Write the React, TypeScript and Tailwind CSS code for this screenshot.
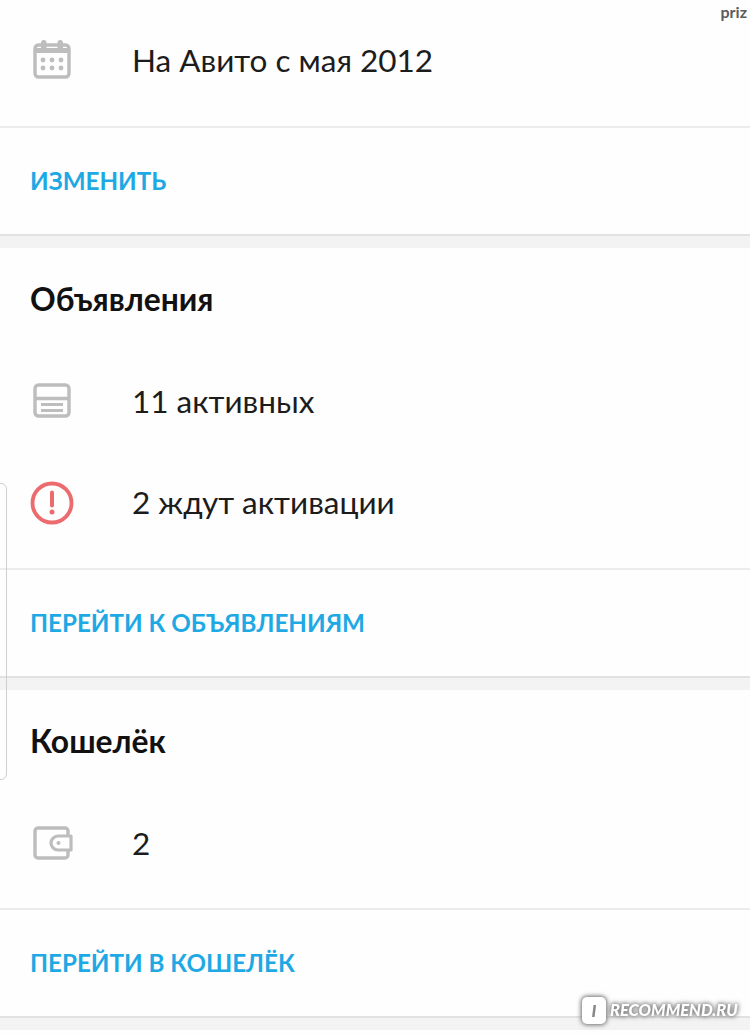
const lato = { fontFamily: '"Lato", "Noto Sans", sans-serif' };

function CalendarIcon() {
  return (
    <svg width="38" height="40" viewBox="0 0 38 40" fill="none" className="-translate-y-[1px]">
      <rect x="2" y="5" width="34" height="32" rx="3.5" stroke="#bdbdbd" strokeWidth="3.4" />
      <rect x="8" y="0" width="5.5" height="10" rx="2.7" fill="#bdbdbd" />
      <rect x="24.5" y="0" width="5.5" height="10" rx="2.7" fill="#bdbdbd" />
      <path d="M3 8h32v5H3z" fill="#bdbdbd" />
      <g fill="#bdbdbd">
        <circle cx="10" cy="20" r="2.4" />
        <circle cx="19" cy="20" r="2.4" />
        <circle cx="28" cy="20" r="2.4" />
        <circle cx="10" cy="28" r="2.4" />
        <circle cx="19" cy="28" r="2.4" />
        <circle cx="28" cy="28" r="2.4" />
      </g>
    </svg>
  );
}

function AdsIcon() {
  return (
    <svg width="38" height="36" viewBox="0 0 38 36" fill="none" className="-translate-y-[1px]">
      <rect x="2" y="2" width="34" height="31" rx="3.5" stroke="#bdbdbd" strokeWidth="3.4" />
      <path d="M2 15.5h34" stroke="#bdbdbd" strokeWidth="3.4" />
      <path d="M8 21.5h22M8 27.5h22" stroke="#bdbdbd" strokeWidth="3" />
    </svg>
  );
}

function AlertIcon() {
  return (
    <svg width="44" height="44" viewBox="0 0 44 44" fill="none" className="-ml-[3px]">
      <circle cx="22" cy="22" r="19.5" stroke="#ec6b6f" strokeWidth="3.8" />
      <path d="M22 11.5v13" stroke="#ec6b6f" strokeWidth="4" strokeLinecap="round" />
      <circle cx="22" cy="31" r="2.5" fill="#ec6b6f" />
    </svg>
  );
}

function WalletIcon() {
  return (
    <svg width="40" height="34" viewBox="0 0 40 34" fill="none" className="-translate-y-[1px]">
      <path d="M35 9V5a3 3 0 0 0-3-3H5a3 3 0 0 0-3 3v24a3 3 0 0 0 3 3h27a3 3 0 0 0 3-3v-4" stroke="#bdbdbd" strokeWidth="3.4" />
      <path d="M38 10H25a7 7 0 0 0 0 14h13z" stroke="#bdbdbd" strokeWidth="3.2" strokeLinejoin="round" />
      <circle cx="25.5" cy="17" r="2" fill="#bdbdbd" />
    </svg>
  );
}

function Row({ icon, text, h }: { icon: React.ReactNode; text: string; h: string }) {
  return (
    <div className={`flex items-center ${h}`}>
      <div className="flex w-[102px] shrink-0 items-center pl-[3px]">{icon}</div>
      <span className="text-[31.5px] leading-none text-[#1c1c1c]">{text}</span>
    </div>
  );
}

function Action({ label }: { label: string }) {
  return (
    <div className="flex h-[108px] items-center border-t-2 border-[#ececec] pl-[30px]">
      <span className="text-[24.2px] font-bold leading-none text-[#1ea9e4]">{label}</span>
    </div>
  );
}

function Heading({ text }: { text: string }) {
  return (
    <div className="flex h-[104px] items-center">
      <span className="text-[31.8px] font-bold leading-none text-[#111111]">{text}</span>
    </div>
  );
}

function Gap() {
  return <div className="h-[14px] border-t-2 border-[#e2e2e2] bg-[#f3f3f3]" />;
}

export default function App() {
  return (
    <div className="relative h-[1034px] w-[750px] overflow-hidden bg-[#fefefe]" style={lato}>
      <div className="pb-[4px] pl-[30px]">
        <Row icon={<CalendarIcon />} text="На Авито с мая 2012" h="h-[122px]" />
      </div>
      <Action label="ИЗМЕНИТЬ" />
      <Gap />

      <div className="pb-[14px] pl-[30px]">
        <Heading text="Объявления" />
        <Row icon={<AdsIcon />} text="11 активных" h="h-[100px]" />
        <Row icon={<AlertIcon />} text="2 ждут активации" h="h-[102px]" />
      </div>
      <Action label="ПЕРЕЙТИ К ОБЪЯВЛЕНИЯМ" />
      <Gap />

      <div className="pb-[15px] pl-[30px]">
        <Heading text="Кошелёк" />
        <Row icon={<WalletIcon />} text="2" h="h-[99px]" />
      </div>
      <Action label="ПЕРЕЙТИ В КОШЕЛЁК" />
      <Gap />

      {/* edge of the overlay + photo marks lying on top */}
      <div className="absolute left-[-10px] top-[483px] h-[297px] w-[17px] rounded-r-[6px] border border-[#cfcfcf]" />
      <span className="absolute right-[3px] top-[4px] text-[16px] font-bold leading-none text-[#5c5c5c]">priz</span>
      <div className="absolute left-[582px] top-[997px] flex items-center gap-[4px] [filter:drop-shadow(0_0_2px_#777777)_drop-shadow(0_0_2px_#999999)]">
        <span className="flex h-[27px] w-[24px] items-center justify-center rounded-[5px] bg-white text-[17px] font-black italic leading-none text-[#888888]">I</span>
        <span className="text-[16.5px] font-black italic leading-none text-white">RECOMMEND.RU</span>
      </div>
    </div>
  );
}
